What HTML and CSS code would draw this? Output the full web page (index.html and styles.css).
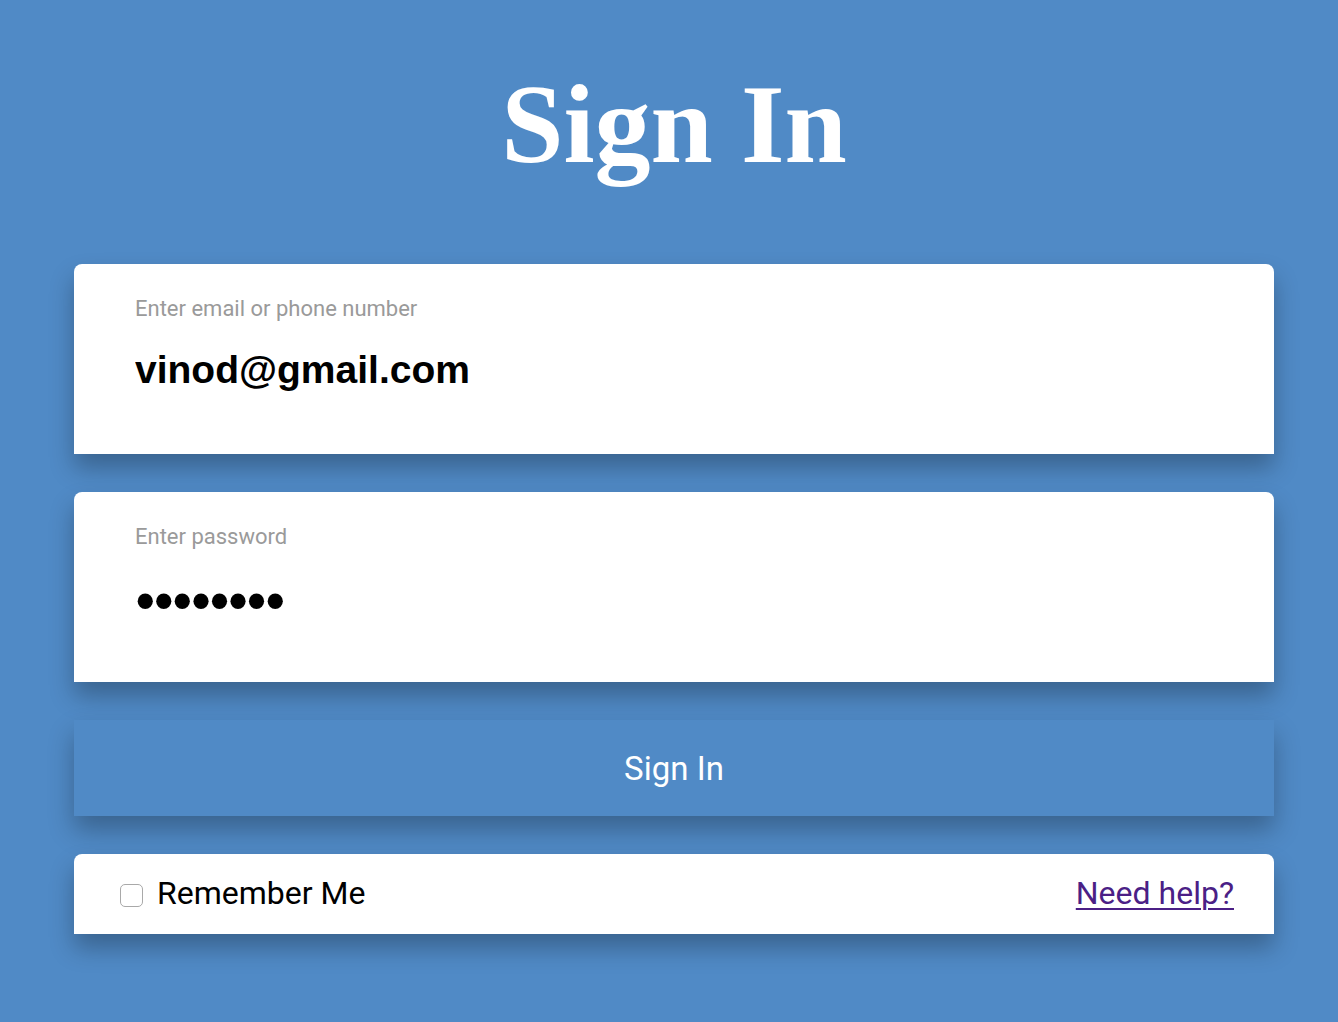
FILE: index.html
```html
<!DOCTYPE html>
<html>
<head>
<meta charset="utf-8">
<link rel="stylesheet" href="styles.css">
</head>
<body>
<main class="page">
  <h1 class="title">Sign In</h1>
  <form class="form">
    <label class="field">
      <span class="field-label">Enter email or phone number</span>
      <input class="field-input" type="text" value="vinod@gmail.com">
    </label>
    <label class="field">
      <span class="field-label">Enter password</span>
      <input class="field-input password" type="password" value="12345678">
    </label>
    <button class="submit" type="button">Sign In</button>
    <div class="extras">
      <label class="remember"><input class="check" type="checkbox"><span>Remember Me</span></label>
      <a class="help" href="#">Need help?</a>
    </div>
  </form>
</main>
</body>
</html>
```
FILE: styles.css
```css
html, body {
  margin: 0;
  padding: 0;
  background: #508ac6;
  height: 100%;
}
body {
  font-family: Roboto, "Liberation Sans", sans-serif;
}
.page {
  width: 1200px;
  margin-left: 74px;
  display: flex;
  flex-direction: column;
}
.title {
  margin: 0;
  padding-top: 64px;
  height: 264px;
  box-sizing: border-box;
  text-align: center;
  font-family: "Liberation Serif", "Times New Roman", serif;
  font-weight: 700;
  font-size: 112px;
  line-height: 120px;
  color: #fff;
}
.form {
  display: flex;
  flex-direction: column;
  gap: 38px;
}
.field {
  display: flex;
  flex-direction: column;
  height: 190px;
  box-sizing: border-box;
  padding: 31px 60px 0 61px;
  background: #fff;
  border-radius: 8px 8px 0 0;
  box-shadow: 0 14px 24px rgba(0, 0, 0, 0.28);
}
.field-label {
  font-size: 22px;
  line-height: 28px;
  color: #9a9a9a;
}
.field-input {
  margin-top: 24px;
  border: none;
  outline: none;
  padding: 0;
  font-family: "Liberation Sans", Arial, sans-serif;
  font-weight: 700;
  font-size: 39px;
  line-height: 46px;
  height: 46px;
  color: #000;
  background: transparent;
}
.password {
  font-size: 53px;
  margin-top: 26px;
  margin-left: 1px;
}
.submit {
  height: 96px;
  border: none;
  background: #508ac6;
  color: #fff;
  font-family: Roboto, "Liberation Sans", sans-serif;
  font-size: 33px;
  box-shadow: 0 14px 24px rgba(0, 0, 0, 0.28);
  padding: 0;
}
.extras {
  height: 80px;
  box-sizing: border-box;
  background: #fff;
  border-radius: 8px 8px 0 0;
  box-shadow: 0 14px 24px rgba(0, 0, 0, 0.28);
  display: flex;
  align-items: center;
  justify-content: space-between;
  padding: 0 40px 0 46px;
}
.remember {
  display: flex;
  align-items: center;
  gap: 14px;
  font-size: 32px;
  color: #000;
}
.remember span {
  margin-top: -2px;
}
.check {
  appearance: none;
  -webkit-appearance: none;
  margin: 2px 0 0 0;
  width: 23px;
  height: 23px;
  border: 1px solid #a9a9a9;
  border-radius: 5px;
  background: #fff;
  box-sizing: border-box;
}
.help {
  font-size: 32px;
  margin-top: -2px;
  color: #4b1f86;
  text-decoration: underline;
  text-underline-offset: 4px;
  text-decoration-thickness: 2px;
}
```
